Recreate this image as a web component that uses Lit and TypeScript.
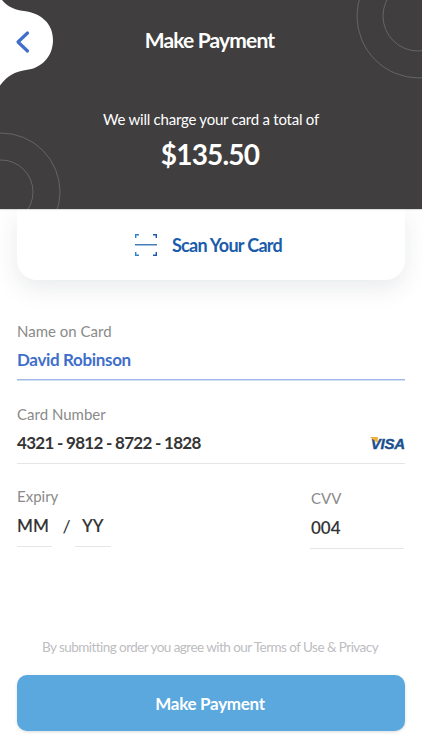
import { LitElement, html, css } from "lit";
import { customElement } from "lit/decorators.js";

@customElement("app-root")
export class AppRoot extends LitElement {
  static styles = css`
    :host { display: block; width: 422px; height: 750px; overflow: hidden; background: #fff; font-family: Lato, "Liberation Sans", sans-serif; position: relative; }
    .header { position: relative; z-index: 2; height: 209px; box-sizing: border-box; background: #403e3f; color: #fff; display: flex; flex-direction: column; align-items: center; padding-top: 27px; overflow: hidden; box-shadow: 0 1px 1px rgba(0,0,0,.12); }
    .deco { position: absolute; inset: 0; width: 422px; height: 209px; }
    .back { position: absolute; left: 0; top: 0; width: 60px; height: 90px; }
    .title { position: relative; font-size: 21px; line-height: 26px; font-weight: 700; letter-spacing: -0.83px; margin-right: 3px; }
    .sub { position: relative; margin-top: 56px; font-size: 15px; line-height: 20px; font-weight: 400; letter-spacing: -0.23px; }
    .amount { position: relative; margin-top: 7px; margin-right: 2px; font-size: 28px; line-height: 36px; font-weight: 700; letter-spacing: -0.8px; }
    .scan { height: 71px; margin: 0 17px; padding-right: 5px; background: #fff; border-radius: 0 0 20px 20px; box-shadow: 0 8px 24px rgba(40,50,70,.1); display: flex; align-items: center; justify-content: center; gap: 15px; color: #1a5cab; font-size: 18px; font-weight: 700; letter-spacing: -0.7px; }
    .scan svg { width: 22px; height: 22px; display: block; }
    .form { padding: 41px 17px 0; display: flex; flex-direction: column; }
    .label { color: #8a8a8a; font-size: 15px; line-height: 20px; }
    .value { font-size: 17px; line-height: 24px; font-weight: 700; letter-spacing: -0.35px; color: #353535; }
    .number { letter-spacing: -0.72px; }
    .field { display: flex; flex-direction: column; }
    .line { display: flex; align-items: center; justify-content: space-between; margin-top: 7px; padding-bottom: 8px; border-bottom: 1px solid #e4e6ea; }
    .name .value { color: #3f6fcb; }
    .name .line { border-bottom-color: #9db8e6; padding-bottom: 7px; box-shadow: 0 1px 0 rgba(157,184,230,.45); }
    .card { margin-top: 24px; }
    .visa-wrap { position: relative; margin-top: 2px; color: #1a4f8f; -webkit-text-stroke: 0.4px #1a4f8f; font-family: "Liberation Sans", sans-serif; font-size: 15px; line-height: 16px; font-weight: 700; font-style: italic; letter-spacing: -0.2px; }
    .visa-wrap::before { content: ""; position: absolute; left: -1px; top: 1px; width: 8px; height: 6px; background: #eeb13c; clip-path: polygon(0 0, 100% 0, 100% 100%); }
    .row { display: flex; justify-content: space-between; margin-top: 22px; }
    .expiry-row { display: flex; align-items: flex-start; margin-top: 8px; }
    .part { width: 35px; padding-bottom: 8px; border-bottom: 1px solid #e4e6ea; font-weight: 600; letter-spacing: 0; }
    .yy { box-sizing: border-box; width: 36px; padding-left: 7px; }
    .slash { box-sizing: border-box; width: 23px; padding-left: 6px; text-align: center; font-size: 18px; line-height: 24px; color: #353535; }
    .cvv { width: 94px; padding-top: 2px; margin-right: 1px; }
    .cvv .line { margin-top: 8px; }
    .cvv .label { padding-left: 1px; }
    .cvv .value { padding-left: 1px; font-weight: 600; letter-spacing: 0; }
    .terms { position: absolute; left: 0; right: 2px; top: 639px; text-align: center; color: #bdbdbf; font-size: 13.5px; line-height: 17px; letter-spacing: -0.55px; }
    .pay { position: absolute; left: 17px; right: 17px; top: 675px; height: 56px; padding-right: 2px; box-sizing: border-box; border-radius: 10px; background: #5aa8de; color: #fff; display: flex; align-items: center; justify-content: center; font-size: 17px; font-weight: 700; letter-spacing: -0.3px; box-shadow: 0 1px 3px rgba(0,0,0,.15); }
  `;

  render() {
    return html`
      <div class="header">
        <svg class="deco" viewBox="0 0 422 209" fill="none" stroke="#706e6f" stroke-width="0.8">
          <circle cx="418" cy="16" r="35"></circle>
          <circle cx="419" cy="16" r="62"></circle>
          <circle cx="1" cy="192" r="32"></circle>
          <circle cx="1" cy="192" r="59"></circle>
        </svg>
        <svg class="back" viewBox="0 0 60 90">
          <path fill="#fff" d="M0 0 H2 C8 7 14 9.5 24 11 C42 13.5 53 24 53 40 C53 57 41 68.5 26 70 C15 71.5 7 76 0 85.5 Z"></path>
          <path fill="none" stroke="#3f6fcb" stroke-width="3.2" stroke-linecap="round" stroke-linejoin="round" d="M27.5 33 L18 42 L27.5 51"></path>
        </svg>
        <div class="title">Make Payment</div>
        <div class="sub">We will charge your card a total of</div>
        <div class="amount">$135.50</div>
      </div>
      <div class="scan">
        <svg viewBox="0 0 22 22" fill="none" stroke-width="1.4">
          <path stroke="#2f83c9" d="M0.7 4 V0.7 H4"></path>
          <path stroke="#1a5cab" d="M18 0.7 H21.3 V4"></path>
          <path stroke="#2f83c9" d="M0.7 18 V21.3 H4"></path>
          <path stroke="#1a5cab" d="M18 21.3 H21.3 V18"></path>
          <path stroke="#1a5cab" stroke-width="1.2" d="M0 10.8 H22"></path>
        </svg>
        <span>Scan Your Card</span>
      </div>
      <div class="form">
        <div class="field name">
          <div class="label">Name on Card</div>
          <div class="line"><div class="value">David Robinson</div></div>
        </div>
        <div class="field card">
          <div class="label">Card Number</div>
          <div class="line">
            <div class="value number">4321 - 9812 - 8722 - 1828</div>
            <div class="visa-wrap">VISA</div>
          </div>
        </div>
        <div class="row">
          <div class="field">
            <div class="label">Expiry</div>
            <div class="expiry-row">
              <div class="value part">MM</div>
              <div class="slash">/</div>
              <div class="value part yy">YY</div>
            </div>
          </div>
          <div class="field cvv">
            <div class="label">CVV</div>
            <div class="line"><div class="value">004</div></div>
          </div>
        </div>
      </div>
      <div class="terms">By submitting order you agree with our Terms of Use &amp; Privacy</div>
      <div class="pay">Make Payment</div>
    `;
  }
}
